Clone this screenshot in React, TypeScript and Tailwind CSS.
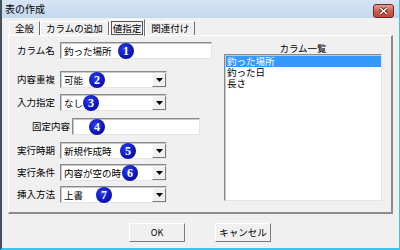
import React from 'react'

const font = { fontFamily: '"Noto Sans CJK JP", "Noto Sans", sans-serif' }

function Badge({ n, left }: { n: string; left: number }) {
  return (
    <span
      className="absolute top-1/2 -translate-y-1/2 flex h-[16px] w-[16px] items-center justify-center rounded-full bg-[radial-gradient(circle_at_40%_35%,#2a3ee8,#0a14b8_60%,#050a7a)] text-[12px] font-bold leading-none text-white"
      style={{ left, fontFamily: '"Liberation Serif", serif' }}
    >
      {n}
    </span>
  )
}

function Field({ width, value, badge }: { width: string; value?: string; badge?: React.ReactNode }) {
  return (
    <div className={`relative h-[17px] ${width} border-t border-l border-[#8a8a8a] border-b border-r border-b-[#e4e4e4] border-r-[#e4e4e4] bg-white`}>
      <div className="h-full border-t border-l border-[#c8c8c8] px-[2px] text-[9.5px] leading-[14px] text-black">{value}</div>
      {badge}
    </div>
  )
}

function Select({ value, badge }: { value: string; badge?: React.ReactNode }) {
  return (
    <div className="relative flex h-[17px] w-[107px] border-t border-l border-[#8a8a8a] border-b border-r border-b-[#e4e4e4] border-r-[#e4e4e4] bg-white">
      <div className="flex flex-1 border-t border-l border-[#c8c8c8]">
        <div className="flex-1 whitespace-nowrap px-[2px] text-[9.5px] leading-[14px] text-black">{value}</div>
        <div className="flex w-[14px] items-center justify-center border-t border-l border-white border-b border-r border-b-[#7a7a7a] border-r-[#7a7a7a] bg-[#f0f0f0]">
          <svg width="7" height="4" viewBox="0 0 7 4">
            <path d="M0 0h7L3.5 4z" fill="#000" />
          </svg>
        </div>
      </div>
      {badge}
    </div>
  )
}

function Row({ label, mt, indent, children }: { label: string; mt: string; indent?: boolean; children: React.ReactNode }) {
  return (
    <div className={`flex items-center ${mt} ${indent ? 'pl-[23px]' : 'pl-[8px]'}`}>
      <span className="w-[36px] whitespace-nowrap text-right text-[9.5px] leading-none text-black">{label}</span>
      <div className={indent ? 'ml-[4px]' : 'ml-[7px]'}>{children}</div>
    </div>
  )
}

function Tab({ label, active }: { label: string; active?: boolean }) {
  if (active) {
    return (
      <div className="relative z-10 -mb-px flex h-[17px] items-start border-t border-l border-white border-r border-r-[#6e6e6e] bg-[#f0f0f0] px-[1px] pt-[1px]">
        <div className="border border-[#555] px-[1px] text-[9.5px] leading-[12px]">{label}</div>
      </div>
    )
  }
  return (
    <div className="mt-[2px] flex h-[14px] items-center border-t border-l border-white border-r border-r-[#6e6e6e] px-[5px] text-[9.5px] leading-none">
      {label}
    </div>
  )
}

export default function App() {
  return (
    <div className="h-[250px] w-[400px] overflow-hidden bg-[#f0f0f0]" style={font}>
      <div className="flex h-full flex-col border-l-2 border-l-[#44505c] border-r border-r-[#3ac4ec] border-b-2 border-b-[#3ac4ec]">
        {/* title bar */}
        <div className="flex h-[18px] shrink-0 items-center justify-between bg-gradient-to-b from-[#d7e5f4] to-[#c3d7ee] pl-[3px] pr-[5px]">
          <span className="text-[10px] leading-none text-black">表の作成</span>
          <div className="mt-[3px] flex h-[14px] w-[21px] items-center justify-center rounded-[3px] border border-[#6d2a22] bg-gradient-to-b from-[#e3a095] via-[#cf5d4c] to-[#c24432]">
            <svg width="9" height="8" viewBox="0 0 9 8">
              <path d="M1 1l7 6M8 1L1 7" stroke="#5a1a10" strokeWidth="3" />
              <path d="M1 1l7 6M8 1L1 7" stroke="#fff" strokeWidth="1.6" />
            </svg>
          </div>
        </div>

        <div className="flex flex-1 flex-col px-[6px] pt-[1px]">
          {/* tabs */}
          <div className="flex h-[16px] items-end pl-[1px]">
            <Tab label="全般" />
            <Tab label="カラムの追加" />
            <Tab label="値指定" active />
            <Tab label="関連付け" />
          </div>

          {/* tab panel */}
          <div className="flex h-[179px] w-[385px] border-t border-l border-white border-r-2 border-b-2 border-r-[#8c8c8c] border-b-[#8c8c8c]">
            <div className="w-[206px]">
              <Row label="カラム名" mt="mt-[6px]">
                <Field width="w-[152px]" value="釣った場所" badge={<Badge n="1" left={57} />} />
              </Row>
              <Row label="内容重複" mt="mt-[12px]">
                <Select value="可能" badge={<Badge n="2" left={28} />} />
              </Row>
              <Row label="入力指定" mt="mt-[6px]">
                <Select value="なし" badge={<Badge n="3" left={22} />} />
              </Row>
              <Row label="固定内容" mt="mt-[7px]" indent>
                <Field width="w-[128px]" badge={<Badge n="4" left={16} />} />
              </Row>
              <Row label="実行時期" mt="mt-[7px]">
                <Select value="新規作成時" badge={<Badge n="5" left={59} />} />
              </Row>
              <Row label="実行条件" mt="mt-[5px]">
                <Select value="内容が空の時" badge={<Badge n="6" left={61} />} />
              </Row>
              <Row label="挿入方法" mt="mt-[5px]">
                <Select value="上書" badge={<Badge n="7" left={35} />} />
              </Row>
            </div>

            <div className="ml-[9px] flex w-[158px] flex-col pt-[7px]">
              <div className="h-[11px] text-center text-[9.5px] leading-[10px]">カラム一覧</div>
              <div className="h-[147px] border-t border-l border-[#8a8a8a] border-b border-r border-b-[#e4e4e4] border-r-[#e4e4e4] bg-white">
                <div
                  className="h-full border-t border-l border-[#c8c8c8] text-[9.5px] leading-[11px]"
                  style={{ fontFamily: '"Liberation Sans", "Noto Sans CJK JP", sans-serif' }}
                >
                  <div className="bg-[#3399ff] px-[1px] text-white">釣った場所</div>
                  <div className="px-[1px]">釣った日</div>
                  <div className="px-[1px]">長さ</div>
                </div>
              </div>
            </div>
          </div>

          {/* buttons */}
          <div className="mt-[9px] flex gap-[30px] pl-[121px]">
            <div className="flex h-[19px] w-[56px] items-center justify-center border-t border-l border-white border-r border-b border-r-[#7a7a7a] border-b-[#7a7a7a] text-[9px] leading-none">
              OK
            </div>
            <div className="flex h-[19px] w-[56px] items-center justify-center border-t border-l border-white border-r border-b border-r-[#7a7a7a] border-b-[#7a7a7a] text-[9.5px] leading-none">
              キャンセル
            </div>
          </div>
        </div>
      </div>
    </div>
  )
}
